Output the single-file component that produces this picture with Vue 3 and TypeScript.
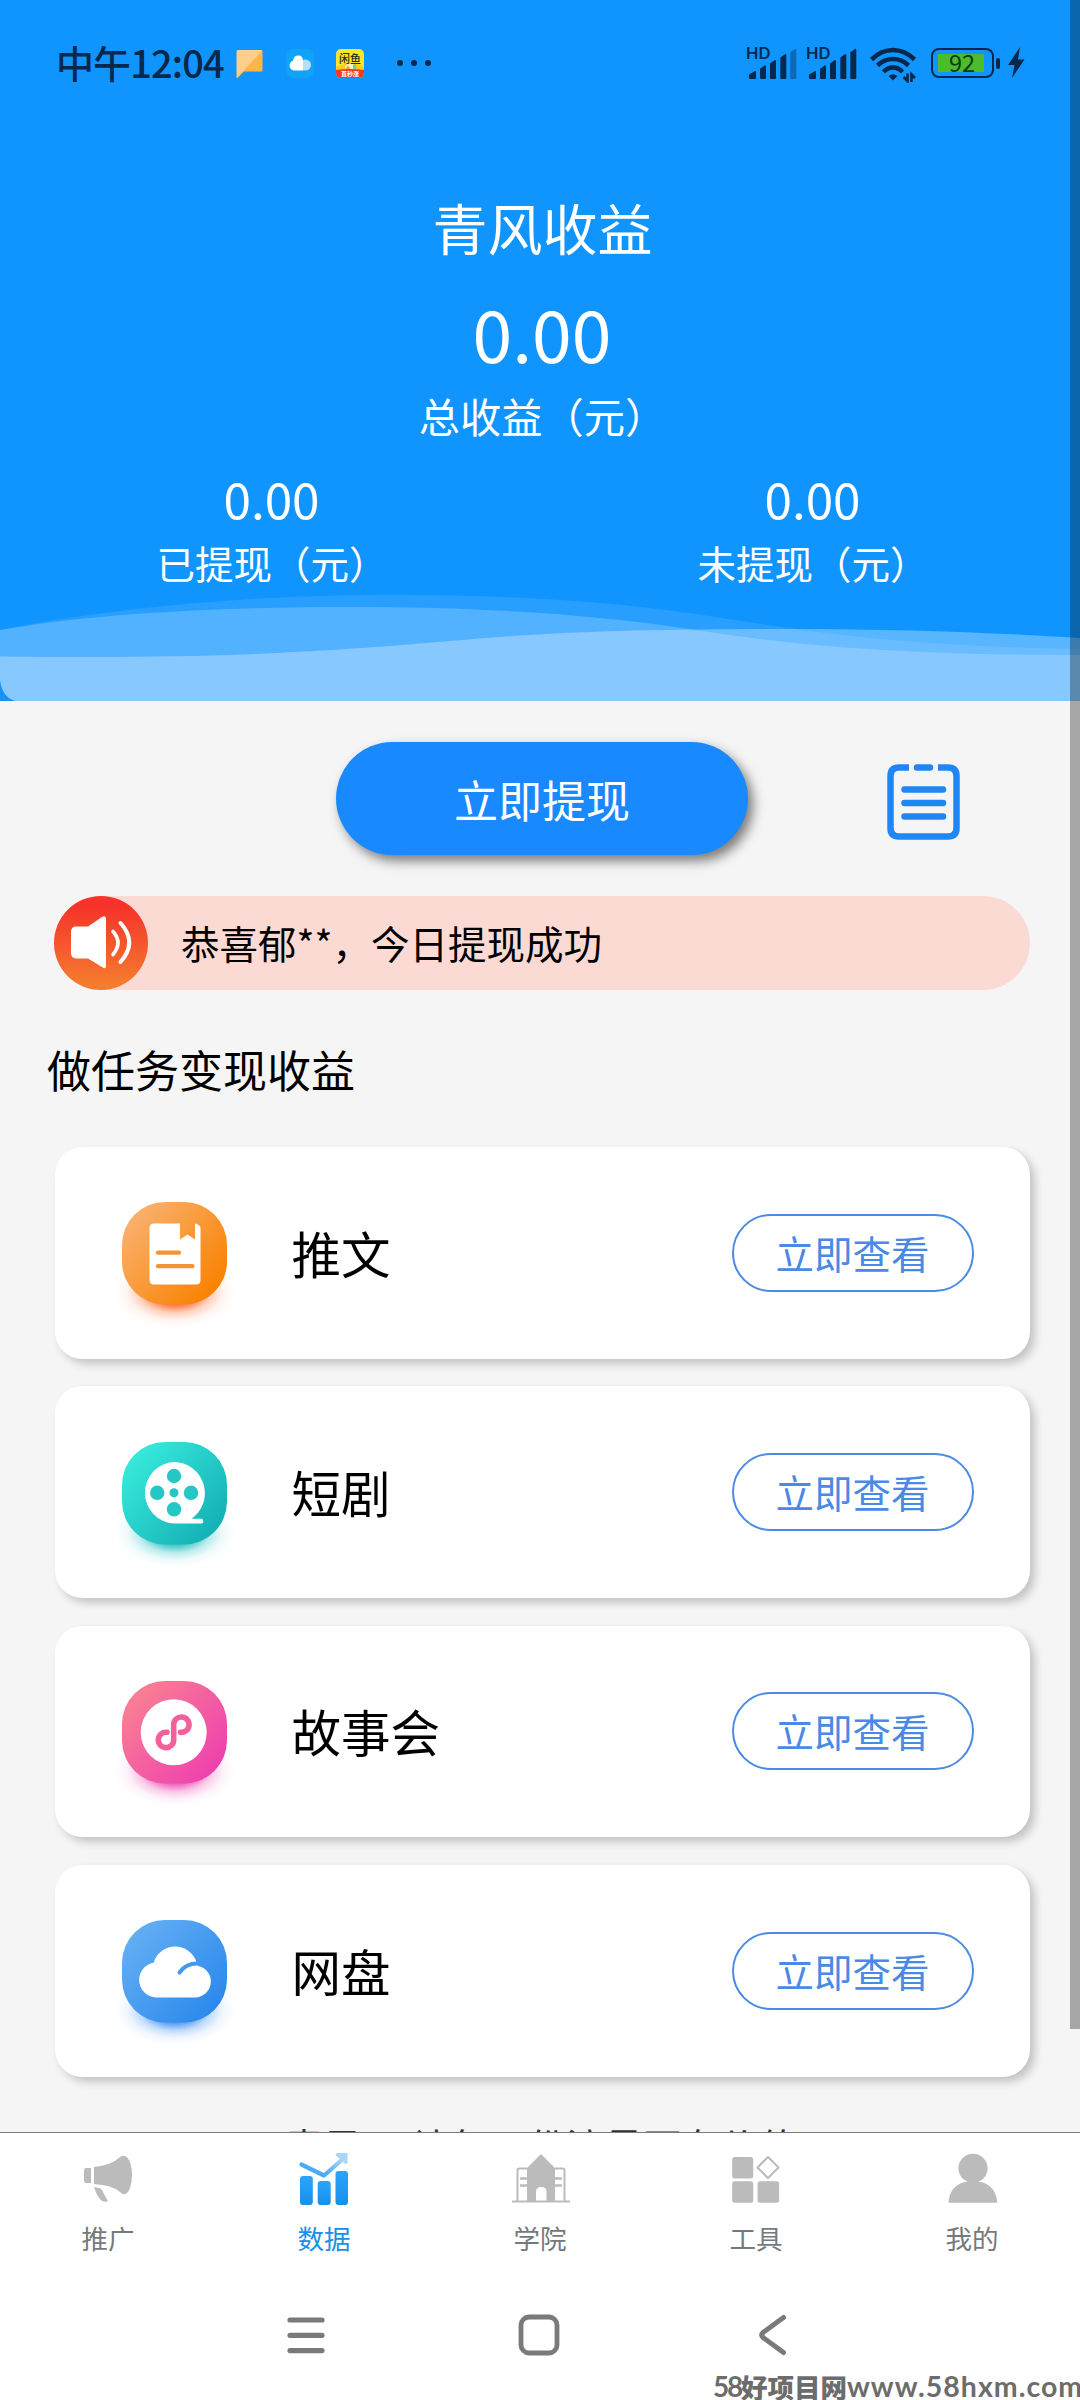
<script setup lang="ts">
interface Task {
  id: string
  name: string
  from: string
  to: string
  glow: string
}

interface Tab {
  id: string
  label: string
  active?: boolean
}

const tasks: Task[] = [
  { id: 'article', name: '推文', from: '#f9b06c', to: '#f98200', glow: '#ff5a14' },
  { id: 'drama', name: '短剧', from: '#37e9da', to: '#14b1b6', glow: '#12b9bd' },
  { id: 'story', name: '故事会', from: '#f97f93', to: '#ee41ae', glow: '#ec3fae' },
  { id: 'drive', name: '网盘', from: '#62aef3', to: '#2c89ec', glow: '#2c86ee' },
]

const tabs: Tab[] = [
  { id: 'promo', label: '推广' },
  { id: 'data', label: '数据', active: true },
  { id: 'academy', label: '学院' },
  { id: 'tools', label: '工具' },
  { id: 'me', label: '我的' },
]

const signals = [4, 5]
const bars = [
  { x: 2, y: 25, w: 7 },
  { x: 13, y: 19.3, w: 6 },
  { x: 23, y: 14, w: 6 },
  { x: 33.3, y: 8, w: 6 },
  { x: 43.3, y: 2.7, w: 6 },
]
</script>

<template>
  <div class="screen">
    <header class="hero">
      <div class="status">
        <span class="clock">中午12:04</span>
        <svg class="s-msg" width="28" height="30" viewBox="0 0 28 30">
          <path d="M2 1H25Q26.500 1 26.500 2.500V21Q26.500 22.500 25 22.500H8L1.500 29Q.7 29.500 .7 28V2.500Q.7 1 2 1Z" fill="#ffb54a" />
          <path d="M2 1H25Q26 1 26 2L1 28.500Q.7 29 .7 28V2.500Q.7 1 2 1Z" fill="#ffcd8c" />
        </svg>
        <svg class="s-cloud" width="28" height="29" viewBox="0 0 28 29">
          <rect width="28" height="29" rx="7" fill="#10a4f9" />
          <circle cx="19.500" cy="16" r="5.500" fill="#b5e0fd" />
          <path d="M8 21.500A5 5 0 0 1 7 11.800Q7.500 6.500 12.500 6.500Q17 6.500 17 12V21.500Z" fill="#fff" />
        </svg>
        <svg class="s-fish" width="28" height="29" viewBox="0 0 28 29">
          <defs><clipPath id="fish"><rect width="28" height="29" rx="5" /></clipPath></defs>
          <g clip-path="url(#fish)">
            <rect width="28" height="29" fill="#fbe526" />
            <path d="M0 18Q14 12 28 18V22H0Z" fill="#ffc928" />
            <ellipse cx="14" cy="18" rx="5" ry="3.500" fill="#fff3c0" />
            <circle cx="12" cy="19" r="1.800" fill="#f79a21" />
            <path d="M17 16l3-1v5h-3Z" fill="#62cfa4" />
            <path d="M0 21Q14 19 28 21V29H0Z" fill="#ee3a22" />
          </g>
          <text x="14" y="14" text-anchor="middle" font-size="11" font-weight="500" fill="#2c2a10">闲鱼</text>
          <text x="14" y="27" text-anchor="middle" font-size="6" font-weight="700" fill="#fff">直秒涨</text>
        </svg>
        <svg class="s-dots" width="36" height="8" viewBox="0 0 36 8" fill="#06284d">
          <circle cx="4" cy="4" r="3" /><circle cx="18" cy="4" r="3" /><circle cx="32" cy="4" r="3" />
        </svg>
        <div class="status-right">
          <div v-for="level in signals" :key="level" class="signal">
            <svg width="51" height="34" viewBox="0 0 51 34" fill="#06284d">
              <text class="hd" x="-1" y="13" textLength="24.500" lengthAdjust="spacingAndGlyphs">HD</text>
              <path
                v-for="(b, i) in bars"
                :key="i"
                :d="`M${b.x} ${b.y + 3.5}L${b.x + b.w - 1} ${b.y}Q${b.x + b.w} ${b.y} ${b.x + b.w} ${b.y + 1}V32Q${b.x + b.w} 33 ${b.x + b.w - 1} 33H${b.x + 1}Q${b.x} 33 ${b.x} 32Z`"
                :opacity="i < level ? 1 : 0.4"
              />
            </svg>
          </div>
          <svg class="wifi" width="47" height="36" viewBox="0 0 47 36" fill="none" stroke="#06284d" stroke-width="4.600">
            <path d="M1.500 12.500Q11 3 23 3T44.500 12.500" />
            <path d="M7.500 18.500Q14 12 23 12T38.500 18.500" />
            <path d="M13.500 25Q17.500 20.500 23 20.500T32.500 25" />
            <path d="M18.500 29Q23 25.500 27.500 29L23 33.500Z" fill="#06284d" stroke="none" />
            <path d="M37.500 26.500V34L33.500 30M41.500 35V27.500L45 31" stroke-width="2.600" />
          </svg>
          <div class="battery"><div class="charge">92</div></div>
          <div class="battery-cap"></div>
          <svg class="bolt" width="18" height="32" viewBox="0 0 18 32"><path d="M13 0L1 18H7.500L5 31L17.500 12.500H11L13 0Z" fill="#06284d" /></svg>
        </div>
      </div>

      <h1 class="title">青风收益</h1>
      <div class="total">0.00</div>
      <div class="total-label">总收益（元）</div>
      <div class="split">
        <div class="part"><b>0.00</b><span>已提现（元）</span></div>
        <div class="part"><b>0.00</b><span>未提现（元）</span></div>
      </div>
      <svg class="waves" width="1080" height="109" viewBox="0 592 1080 109" fill="#fff">
        <path d="M0 630C120 606 260 595 385 595C520 595 610 602 696 614C785 628 890 646 1080 649V701H0Z" opacity=".1" />
        <path d="M0 630C100 612 230 607 350 607C480 607 590 614 689 629C790 645 900 655 1080 655V701H0Z" opacity=".2" />
        <path d="M0 656.500Q120 658 231 655C380 649 440 641 500 637C590 630 700 629 792 629C900 629 1000 633 1080 638V701H0Z" opacity=".3" />
        <path d="M0 680Q2 697 15 701H0Z" fill="#1593f7" />
      </svg>
    </header>

    <main class="content">
      <div class="actions">
        <button class="withdraw">立即提现</button>
        <svg class="records" width="74" height="76" viewBox="0 0 74 76" fill="none" stroke="#1f86f3" stroke-width="6.500">
          <path d="M22 3.500H12Q3.500 3.500 3.500 12V64Q3.500 72.500 12 72.500H61Q69.500 72.500 69.500 64V12Q69.500 3.500 61 3.500H51" />
          <path d="M30 3.500H43M17.500 25.500H56M17.500 39H56M17.500 52.500H56" stroke-linecap="round" />
        </svg>
      </div>

      <div class="notice">
        <svg width="94" height="94" viewBox="0 0 94 94">
          <defs>
            <linearGradient id="horn" x1="0" y1="0" x2="0" y2="1">
              <stop offset=".1" stop-color="#f6322a" /><stop offset=".95" stop-color="#f47d2e" />
            </linearGradient>
          </defs>
          <circle cx="47" cy="47" r="47" fill="url(#horn)" />
          <path d="M17 36Q17 30.500 22 30.500H34L48 21Q52 19 52 23V70Q52 74 48 71L34 62.500H22Q17 62 17 57Z" fill="#fff" />
          <path d="M59 35.500Q69 46.500 59 58.500" fill="none" stroke="#fff" stroke-width="3.600" stroke-linecap="round" />
          <path d="M66.500 27Q84 46.500 66.500 66" fill="none" stroke="#fff" stroke-width="4" stroke-linecap="round" />
        </svg>
        <span>恭喜郁**，今日提现成功</span>
      </div>

      <h2 class="section">做任务变现收益</h2>

      <div class="tasks">
        <div v-for="t in tasks" :key="t.id" class="card">
          <svg class="task-icon" width="105" height="103" viewBox="0 0 105 103">
            <defs>
              <linearGradient :id="`g-${t.id}`" x1=".1" y1=".15" x2=".9" y2=".85">
                <stop offset="0" :stop-color="t.from" /><stop offset="1" :stop-color="t.to" />
              </linearGradient>
              <radialGradient :id="`s-${t.id}`">
                <stop offset=".35" :stop-color="t.glow" stop-opacity=".85" />
                <stop offset=".6" :stop-color="t.glow" stop-opacity=".28" />
                <stop offset=".8" :stop-color="t.glow" stop-opacity=".07" />
                <stop offset="1" :stop-color="t.glow" stop-opacity="0" />
              </radialGradient>
            </defs>
            <ellipse cx="53" cy="90" rx="60" ry="35" :fill="`url(#s-${t.id})`" />
            <rect width="105" height="102.500" rx="43" :fill="`url(#g-${t.id})`" />
            <g v-if="t.id === 'article'">
              <path d="M32 21.500H58V37.500L65.500 32.500L73 37.500V21.500Q78.500 23 78.500 26V78Q78.500 82.500 74 82.500H32Q27.500 82.500 27.500 78V26Q27.500 21.500 32 21.500Z" fill="#fff" />
              <path d="M36 50.700H57M36 64.200H70.500" stroke="#f29338" stroke-width="4.200" stroke-linecap="round" />
            </g>
            <g v-else-if="t.id === 'drama'">
              <path d="M52 20a31.200 31.200 0 0 1 17.500 56.800H79a2.200 2.200 0 0 1 0 4.700H52A30.800 30.800 0 0 1 52 20Z" fill="#fff" />
              <g fill="#24c7c3">
                <circle cx="52" cy="34" r="7.200" /><circle cx="35.200" cy="50.800" r="7.200" />
                <circle cx="69" cy="50.800" r="7.200" /><circle cx="52" cy="67.300" r="7.200" />
                <circle cx="52" cy="50.800" r="4.500" />
              </g>
            </g>
            <g v-else-if="t.id === 'story'">
              <circle cx="51.700" cy="51.300" r="33" fill="#fff" />
              <path d="M58.500 51.300A7.700 7.700 0 1 0 51.700 43.500V59A7.700 7.700 0 1 1 45 51.300" fill="none" stroke="#f4609c" stroke-width="5.600" stroke-linecap="round" />
            </g>
            <g v-else>
              <path d="M34 77.500A17.500 17.500 0 0 1 31.500 42.800A22.500 22.500 0 0 1 74.500 42L76 46A15.900 15.900 0 0 1 73 77.500Z" fill="#fff" />
              <path d="M57.500 52.500Q64 43 76.500 43.500" fill="none" stroke="#4499ee" stroke-width="4" stroke-linecap="round" />
            </g>
          </svg>
          <span class="task-name">{{ t.name }}</span>
          <button class="view">立即查看</button>
        </div>
      </div>

      <p class="slogan">青风&nbsp;，让每一份流量更有价值</p>
    </main>

    <nav class="tabbar">
      <div v-for="t in tabs" :key="t.id" class="tab" :class="{ active: t.active }">
        <svg width="60" height="56" viewBox="0 0 60 56" fill="#bbb">
          <g v-if="t.id === 'promo'">
            <path d="M8 14H13V29H8Q6 29 6 26V17Q6 14 8 14ZM16 13Q34 11 42 3Q48-1 52 8Q56 21 52 34Q48 44 42 38Q34 31 16 30Z" />
            <path d="M16 33L23 34.500Q26 40 30 47Q28 48.500 24 47Q19 43 16 33Z" />
          </g>
          <g v-else-if="t.id === 'data'">
            <defs>
              <linearGradient id="barfill" x1="0" y1="0" x2="0" y2="1"><stop offset="0" stop-color="#2ba5fb" /><stop offset="1" stop-color="#1790ea" /></linearGradient>
              <linearGradient id="trend" x1="0" y1="1" x2="1" y2="0"><stop offset=".3" stop-color="#4aabf2" /><stop offset="1" stop-color="#add8f8" /></linearGradient>
            </defs>
            <g fill="url(#barfill)">
              <rect x="6" y="22" width="12.800" height="29" rx="3" /><rect x="23.700" y="27" width="13" height="24" rx="3" /><rect x="41.500" y="17" width="12.500" height="34" rx="3" />
            </g>
            <path d="M7.500 10.500L30 21.500L50 4" fill="none" stroke="url(#trend)" stroke-width="4.200" stroke-linejoin="round" stroke-linecap="round" />
            <path d="M43-1H53.500V9Q51 11.500 49.500 8L43 2.500Q40 .5 43-1Z" fill="#a9d5f7" />
          </g>
          <g v-else-if="t.id === 'academy'">
            <path d="M17 14L31 0L45 14V47H36.500V38Q36.500 33 31.500 33H31Q26 33 26 38V47H17Z" />
            <path d="M2 47.500H60M7.500 47V16.500Q7.500 14.500 9.500 14.500H17M54.500 47V16.500Q54.500 14.500 52.500 14.500H45" fill="none" stroke="#bbb" stroke-width="2" />
            <path d="M10 24.500H17M10 31.500H17M45 24.500H52M45 31.500H52" stroke="#bbb" stroke-width="2.500" />
          </g>
          <g v-else-if="t.id === 'tools'">
            <rect x="6.200" y="3" width="21" height="21.500" rx="2.500" /><rect x="6.200" y="27.200" width="21" height="21.500" rx="2.500" /><rect x="31.600" y="27.200" width="21.500" height="21.500" rx="2.500" />
            <path d="M42 3L52.500 13.500L42 24L31.500 13.500Z" fill="none" stroke="#bbb" stroke-width="2" stroke-linejoin="round" />
          </g>
          <g v-else>
            <circle cx="31" cy="14.300" r="14.600" />
            <path d="M6.500 48.700Q7.500 33 21 28.500Q31 25.500 41 28.500Q54 33 55.200 48.700Z" />
          </g>
        </svg>
        <span>{{ t.label }}</span>
      </div>
    </nav>

    <footer class="sysnav">
      <svg width="42" height="42" viewBox="0 0 42 42" fill="none" stroke="#7a7a7a" stroke-width="5.200" stroke-linecap="round">
        <path d="M5 6H37M5 21.300H37M5 36.600H37" />
      </svg>
      <svg width="42" height="42" viewBox="0 0 42 42" fill="none" stroke="#7a7a7a" stroke-width="4.800">
        <rect x="3" y="3" width="36" height="36" rx="8" />
      </svg>
      <svg width="42" height="42" viewBox="0 0 42 42" fill="none" stroke="#7a7a7a" stroke-width="5" stroke-linecap="round" stroke-linejoin="round">
        <path d="M32.500 3.500L12 18.500Q9.500 21 12 23.500L32.500 38.500" />
      </svg>
    </footer>

    <div class="scrollbar"></div>
    <div class="watermark"><span>58</span><b>好项目网</b><i>www.58hxm.com</i></div>
  </div>
</template>

<style>
body {
  margin: 0;
  overflow: hidden;
}
</style>

<style scoped>
.screen {
  position: relative;
  display: flex;
  flex-direction: column;
  width: 1080px;
  height: 2400px;
  overflow: hidden;
  background: #fff;
  color: #000;
  font-family: 'Noto Sans CJK SC', sans-serif;
}
.hero {
  display: flex;
  flex-direction: column;
  flex: none;
  height: 701px;
  background: #1095ff;
  color: #fff;
  text-align: center;
}
.status {
  display: flex;
  align-items: center;
  box-sizing: border-box;
  height: 126px;
  padding-left: 56px;
  color: #06284d;
}
.clock {
  width: 180px;
  margin-top: -3px;
  font-size: 38px;
  font-weight: 500;
  line-height: 50px;
  letter-spacing: -0.9px;
  text-align: left;
  white-space: nowrap;
}
.s-msg { margin: 2px 0 0 0; }
.s-cloud { margin-left: 22px; }
.s-fish { margin-left: 22px; }
.s-dots { margin-left: 32px; }
.status-right {
  display: flex;
  align-items: center;
  margin-left: auto;
  padding-right: 55px;
}
.signal {
  display: flex;
  width: 60px;
}
.signal svg { overflow: visible; }
.hd {
  font-family: Inter, sans-serif;
  font-size: 15.500px;
  font-weight: 600;
}
.signal + .wifi { margin: 3px 0 0 3px; }
.battery {
  display: flex;
  box-sizing: border-box;
  width: 63px;
  height: 30px;
  margin-left: 14px;
  padding: 3.500px 4.500px;
  border: 2.500px solid #06284d;
  border-radius: 8px;
}
.charge {
  width: 46px;
  height: 18px;
  background: #4cbb2c;
  color: #0b3a18;
  font-size: 23.500px;
  line-height: 17px;
  text-indent: 3px;
}
.battery-cap {
  width: 4px;
  height: 11px;
  margin-left: 2px;
  border-radius: 2px;
  background: #06284d;
}
.bolt { margin-left: 7px; }
.title {
  margin: 60px 0 0;
  padding-left: 5px;
  font-size: 55px;
  font-weight: 400;
  line-height: 80px;
}
.total {
  margin-top: 16px;
  padding-left: 4px;
  font-size: 71.500px;
  line-height: 100px;
}
.total-label {
  margin-top: 3px;
  padding-left: 5px;
  font-size: 41.250px;
  line-height: 60px;
}
.split {
  display: flex;
  margin-top: 20px;
  padding-left: 1px;
}
.part {
  display: flex;
  flex: none;
  flex-direction: column;
  gap: 3px;
  width: 541px;
}
.part b {
  font-size: 49.500px;
  font-weight: 400;
  line-height: 66px;
}
.part span {
  padding-left: 1px;
  font-size: 38.500px;
  line-height: 56px;
}
.waves {
  display: block;
  flex: none;
  margin-top: auto;
}
.content {
  flex: none;
  box-sizing: border-box;
  height: 1431px;
  overflow: hidden;
  background: #f5f5f5;
}
.actions {
  display: flex;
  align-items: center;
  height: 195px;
  padding-left: 336px;
}
.withdraw {
  width: 412px;
  height: 113px;
  padding: 0;
  border: 0;
  border-radius: 57px;
  background: #1989ff;
  box-shadow: 5px 6px 12px rgba(0, 0, 0, 0.5);
  color: #fff;
  font: inherit;
  font-size: 44px;
}
.records { margin: 7px 0 0 138.500px; }
.notice {
  display: flex;
  align-items: center;
  width: 976px;
  height: 94px;
  margin-left: 54px;
  border-radius: 47px;
  background: #fcdad4;
  font-size: 38.500px;
  line-height: 56px;
}
.notice span { margin: -3px 0 0 33px; }
.section {
  margin: 47px 0 0 47px;
  font-size: 44px;
  font-weight: 400;
  line-height: 64px;
}
.tasks {
  display: flex;
  flex-direction: column;
  gap: 27.500px;
  margin: 46px 0 0 55px;
}
.card {
  display: flex;
  align-items: center;
  box-sizing: border-box;
  width: 974.500px;
  height: 211.750px;
  padding: 0 56px 0 67px;
  border-radius: 27.500px;
  background: #fff;
  box-shadow: 5px 5px 9px rgba(0, 0, 0, 0.2);
}
.task-icon {
  margin-top: 2px;
  overflow: visible;
}
.task-name {
  margin-left: 64.500px;
  font-size: 49.500px;
  line-height: 70px;
}
.view {
  box-sizing: border-box;
  width: 242px;
  height: 78px;
  margin-left: auto;
  padding: 0 0 2px;
  border: 2px solid #4c8ae3;
  border-radius: 39px;
  background: transparent;
  color: #4a89e6;
  font: inherit;
  font-size: 38.500px;
  line-height: 66px;
}
.slogan {
  margin: 38.500px 0 0;
  padding-left: 2px;
  color: #333;
  font-size: 38.500px;
  line-height: 60px;
  word-spacing: 3.500px;
  text-align: center;
  white-space: nowrap;
}
.tabbar {
  display: flex;
  flex: none;
  box-sizing: border-box;
  height: 150px;
  padding-top: 21px;
  border-top: 1px solid #7d7d7d;
  background: #fff;
}
.tab {
  display: flex;
  flex: none;
  flex-direction: column;
  align-items: center;
  width: 216px;
  color: #74797d;
  font-size: 26.500px;
  line-height: 40px;
}
.tab svg { overflow: visible; }
.tab span { margin-top: 8px; }
.tab.active { color: #1b8ee9; }
.sysnav {
  display: flex;
  align-items: center;
  gap: 191px;
  height: 105px;
  padding-left: 285px;
}
.scrollbar {
  position: absolute;
  top: 0;
  right: 0;
  width: 10px;
  height: 2029px;
  background: rgba(0, 0, 0, 0.32);
}
.watermark {
  position: absolute;
  right: 0;
  bottom: 0;
  display: flex;
  width: 367px;
  color: #6c6c6c;
  font-size: 26.500px;
  font-weight: 700;
  line-height: 27px;
  white-space: nowrap;
}
.watermark span { width: 28px; font-family: Lato, sans-serif; font-size: 28px; letter-spacing: -2.200px; }
.watermark b { width: 108px; font-weight: 900; }
.watermark i { font-family: Lato, sans-serif; font-style: normal; font-size: 28.500px; letter-spacing: 1px; }
</style>
